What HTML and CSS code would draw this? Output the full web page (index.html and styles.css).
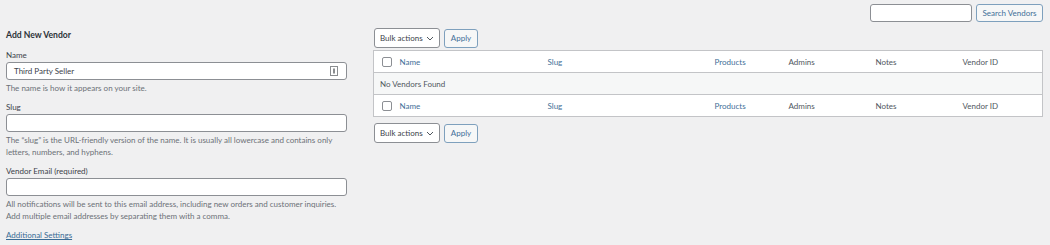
FILE: index.html
```html
<!DOCTYPE html>
<html lang="en">
<head>
<meta charset="utf-8">
<title>Vendors</title>
<link rel="stylesheet" href="styles.css">
</head>
<body>
<div class="wrap">
  <div class="search-row">
    <input class="search-input" type="search" aria-label="Search Vendors">
    <button class="btn">Search Vendors</button>
  </div>
  <div class="cols">
    <div class="col-left">
      <h2 class="form-title">Add New Vendor</h2>
      <div class="field">
        <label class="label">Name</label>
        <div class="input has-icon">
          <span class="value">Third Party Seller</span>
          <svg class="pm-icon" width="8" height="10" viewBox="0 0 8 10"><rect x="0.5" y="0.5" width="7" height="9" fill="none" stroke="#8a8d90"/><rect x="3" y="2.5" width="2" height="5" fill="#8a8d90"/></svg>
        </div>
        <p class="desc">The name is how it appears on your site.</p>
      </div>
      <div class="field">
        <label class="label">Slug</label>
        <div class="input"></div>
        <p class="desc">The “slug” is the URL-friendly version of the name. It is usually all lowercase and contains only letters, numbers, and hyphens.</p>
      </div>
      <div class="field">
        <label class="label">Vendor Email (required)</label>
        <div class="input"></div>
        <p class="desc">All notifications will be sent to this email address, including new orders and customer inquiries. Add multiple email addresses by separating them with a comma.</p>
      </div>
      <a class="link" href="#">Additional Settings</a>
    </div>
    <div class="col-right">
      <div class="tablenav">
        <div class="select">Bulk actions <svg class="caret" width="8" height="5" viewBox="0 0 8 5"><path d="M1 1l3 3 3-3" fill="none" stroke="#50575e" stroke-width="1"/></svg></div>
        <button class="btn">Apply</button>
      </div>
      <table class="list">
        <colgroup>
          <col class="c-cb"><col class="c-name"><col class="c-slug"><col class="c-prod"><col class="c-adm"><col class="c-notes"><col>
        </colgroup>
        <thead>
          <tr><td class="cb"><span class="box"></span></td><th class="sort">Name</th><th class="sort">Slug</th><th class="sort">Products</th><th>Admins</th><th>Notes</th><th>Vendor ID</th></tr>
        </thead>
        <tbody>
          <tr class="empty"><td colspan="7">No Vendors Found</td></tr>
        </tbody>
        <tfoot>
          <tr><td class="cb"><span class="box"></span></td><th class="sort">Name</th><th class="sort">Slug</th><th class="sort">Products</th><th>Admins</th><th>Notes</th><th>Vendor ID</th></tr>
        </tfoot>
      </table>
      <div class="tablenav bottom">
        <div class="select">Bulk actions <svg class="caret" width="8" height="5" viewBox="0 0 8 5"><path d="M1 1l3 3 3-3" fill="none" stroke="#50575e" stroke-width="1"/></svg></div>
        <button class="btn">Apply</button>
      </div>
    </div>
  </div>
</div>
</body>
</html>
```
FILE: styles.css
```css
html, body {
  margin: 0;
  padding: 0;
  background: #f0f0f1;
}
body {
  font-family: Lato, "Open Sans", sans-serif;
  font-size: 8px;
  line-height: 12px;
  color: #50575e;
}
.wrap {
  padding: 4px 7px 0 6px;
}
.search-row {
  display: flex;
  justify-content: flex-end;
  gap: 4px;
  height: 18px;
}
.search-input {
  box-sizing: border-box;
  width: 102px;
  height: 18px;
  margin: 0;
  border: 1px solid #8c8f94;
  border-radius: 3px;
  background: #fff;
}
.btn {
  box-sizing: border-box;
  height: 18px;
  margin: 0;
  padding: 0 5px;
  border: 1px solid #7ea0bd;
  border-radius: 3px;
  background: #f6f7f7;
  color: #3f6f98;
  font-family: inherit;
  font-size: 8px;
  line-height: 16px;
}
.search-row .btn {
  width: 67px;
  padding: 0;
}
.cols {
  display: flex;
  gap: 26px;
  margin-top: 6px;
}
.col-left {
  width: 341px;
  flex: none;
}
.col-right {
  flex: 1;
}
.form-title {
  margin: 1px 0 8px;
  font-size: 8.6px;
  line-height: 12px;
  font-weight: 700;
  color: #2c3338;
}
.field {
  margin-bottom: 7px;
}
.label {
  display: block;
  line-height: 12px;
  margin-bottom: 1px;
  color: #3c434a;
}
.input {
  box-sizing: border-box;
  height: 18px;
  border: 1px solid #8c8f94;
  border-radius: 3px;
  background: #fff;
  display: flex;
  align-items: center;
  justify-content: space-between;
  padding: 0 8px 0 7px;
}
.value {
  color: #3c434a;
}
.pm-icon {
  display: block;
  flex: none;
}
.desc {
  margin: 2px 0 0;
  color: #6c7177;
  line-height: 12px;
}
.link {
  display: inline-block;
  margin-top: 0;
  color: #3a6c96;
  text-decoration: underline;
}
.tablenav {
  display: flex;
  gap: 4px;
  align-items: center;
  height: 20px;
  margin-bottom: 2px;
}
.tablenav.bottom {
  margin-top: 6px;
}
.select {
  box-sizing: border-box;
  height: 20px;
  width: 66px;
  margin-left: 1px;
  border: 1px solid #8c8f94;
  border-radius: 3px;
  background: #fff;
  color: #3c434a;
  display: flex;
  align-items: center;
  gap: 3px;
  padding: 0 4px 0 5px;
  white-space: nowrap;
}
.caret {
  flex: none;
  display: block;
}
.tablenav .btn {
  width: 34px;
  padding: 0;
  height: 19px;
}
.list {
  width: 100%;
  border-collapse: collapse;
  table-layout: fixed;
  border: 1px solid #c3c4c7;
  background: #fff;
}
.c-cb { width: 19px; }
.c-name { width: 148px; }
.c-slug { width: 167px; }
.c-prod { width: 74px; }
.c-adm { width: 87px; }
.c-notes { width: 87px; }
.list th, .list td {
  height: 21px;
  padding: 0 7px;
  text-align: left;
  font-weight: 400;
  color: #50575e;
  vertical-align: middle;
}
.list th.sort {
  color: #3f6f98;
}
.list td.cb {
  padding: 0 0 0 8px;
}
.box {
  display: block;
  box-sizing: border-box;
  width: 10px;
  height: 10px;
  border: 1px solid #8c8f94;
  border-radius: 2px;
  background: #fff;
}
.list thead tr {
  border-bottom: 1px solid #c3c4c7;
}
.list tfoot tr {
  border-top: 1px solid #c3c4c7;
}
.list .empty td {
  background: #f6f7f7;
  padding-left: 6px;
}
```
